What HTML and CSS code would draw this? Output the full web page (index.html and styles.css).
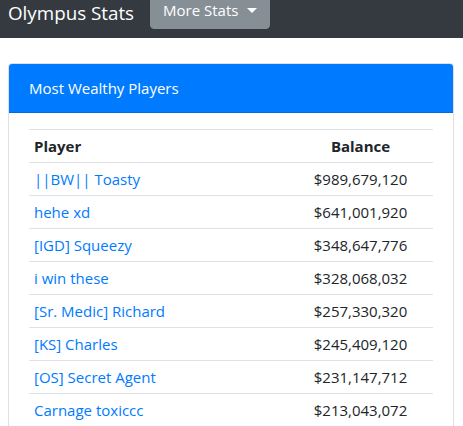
FILE: index.html
```html
<!DOCTYPE html>
<html>
<head>
    <title>Olympus Stats</title>
    <link rel="stylesheet" href="styles.css">
</head>
<body>
    <nav class="navbar">
        <a class="navbar-brand" href="#">Olympus Stats</a>
        <button class="btn-dropdown">More Stats <span class="caret"></span></button>
    </nav>

    <div class="container">
        <div class="card">
            <div class="card-header">Most Wealthy Players</div>
            <div class="card-body">
                <table class="table">
                    <thead>
                        <tr>
                            <th>Player</th>
                            <th class="col-balance">Balance</th>
                        </tr>
                    </thead>
                    <tbody>
                        <tr><td><a href="#">||BW|| Toasty</a></td><td class="col-balance">$989,679,120</td></tr>
                        <tr><td><a href="#">hehe xd</a></td><td class="col-balance">$641,001,920</td></tr>
                        <tr><td><a href="#">[IGD] Squeezy</a></td><td class="col-balance">$348,647,776</td></tr>
                        <tr><td><a href="#">i win these</a></td><td class="col-balance">$328,068,032</td></tr>
                        <tr><td><a href="#">[Sr. Medic] Richard</a></td><td class="col-balance">$257,330,320</td></tr>
                        <tr><td><a href="#">[KS] Charles</a></td><td class="col-balance">$245,409,120</td></tr>
                        <tr><td><a href="#">[OS] Secret Agent</a></td><td class="col-balance">$231,147,712</td></tr>
                        <tr><td><a href="#">Carnage toxiccc</a></td><td class="col-balance">$213,043,072</td></tr>
                    </tbody>
                </table>
            </div>
        </div>
    </div>
</body>
</html>
```
FILE: styles.css
```css
* {
    margin: 0;
    padding: 0;
    box-sizing: border-box;
}

body {
    font-family: 'Open Sans', 'Noto Sans', sans-serif;
    font-size: 15px;
    line-height: 24px;
    color: #212529;
    background-color: #fff;
    overflow: hidden;
}

a {
    color: #007bff;
    text-decoration: none;
}

.navbar {
    height: 38px;
    background-color: #343a40;
    display: flex;
    align-items: flex-start;
    padding: 0 8px;
}

.navbar-brand {
    color: #fff;
    font-size: 18.8px;
    line-height: 26px;
    margin-right: 16px;
}

.btn-dropdown {
    margin-top: -9px;
    height: 38px;
    padding: 6px 12px;
    background-color: #868e96;
    border: 1px solid #868e96;
    border-radius: 4px;
    color: #fff;
    font-family: inherit;
    font-size: 15px;
    line-height: 24px;
    display: flex;
    align-items: center;
}

.caret {
    display: inline-block;
    margin-left: 9px;
    border-top: 5px solid #fff;
    border-left: 5px solid transparent;
    border-right: 5px solid transparent;
}

.container {
    padding: 25px 9px 0 8px;
}

.card {
    border: 1px solid rgba(0, 0, 0, 0.125);
    border-radius: 4px;
    overflow: hidden;
}

.card-header {
    background-color: #007bff;
    color: #fff;
    padding: 12px 20px;
    border-bottom: 1px solid rgba(0, 0, 0, 0.125);
    height: 49px;
}

.card-body {
    padding: 16px 20px;
}

.table {
    width: 100%;
    border-collapse: collapse;
}

.table th,
.table td {
    padding: 4px 5px;
    border-top: 1px solid #dee2e6;
    text-align: left;
    vertical-align: top;
}

.table th {
    font-weight: 700;
}

.table .col-balance {
    width: 145px;
    text-align: center;
}
```
